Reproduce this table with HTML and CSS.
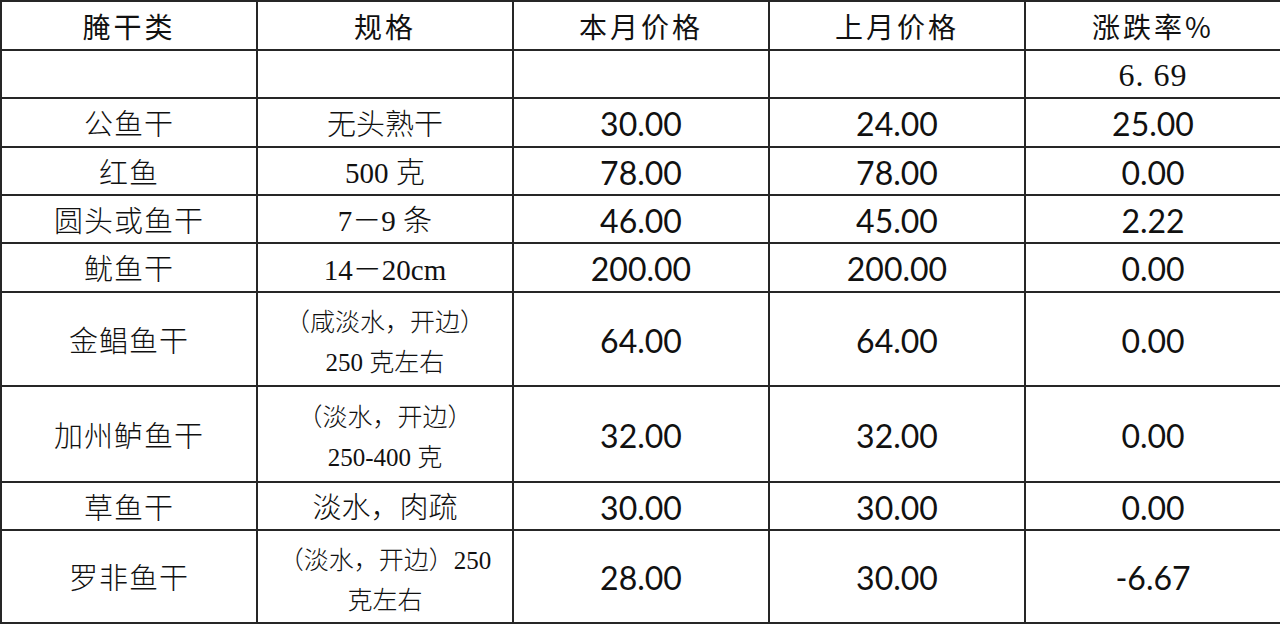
FILE: index.html
```html
<!DOCTYPE html>
<html lang="zh">
<head>
<meta charset="utf-8">
<link rel="stylesheet" href="styles.css">
</head>
<body>
<table class="price">
  <colgroup><col class="c"><col class="c"><col class="c"><col class="c"><col class="c"></colgroup>
  <tr class="h49 head">
    <td>腌干类</td><td>规格</td><td>本月价格</td><td>上月价格</td><td>涨跌率%</td>
  </tr>
  <tr class="h48">
    <td></td><td></td><td></td><td></td><td class="serifnum">6. 69</td>
  </tr>
  <tr class="h49">
    <td class="name">公鱼干</td><td class="spec">无头熟干</td><td class="num">30.00</td><td class="num">24.00</td><td class="num">25.00</td>
  </tr>
  <tr class="h48">
    <td class="name">红鱼</td><td class="spec">500 克</td><td class="num">78.00</td><td class="num">78.00</td><td class="num">0.00</td>
  </tr>
  <tr class="h48">
    <td class="name">圆头或鱼干</td><td class="spec">7－9 条</td><td class="num">46.00</td><td class="num">45.00</td><td class="num">2.22</td>
  </tr>
  <tr class="h49">
    <td class="name">鱿鱼干</td><td class="spec">14－20cm</td><td class="num">200.00</td><td class="num">200.00</td><td class="num">0.00</td>
  </tr>
  <tr class="h94">
    <td class="name">金鲳鱼干</td><td class="spec small">（咸淡水，开边）<br>250 克左右</td><td class="num">64.00</td><td class="num">64.00</td><td class="num">0.00</td>
  </tr>
  <tr class="h96">
    <td class="name">加州鲈鱼干</td><td class="spec small">（淡水，开边）<br>250-400 克</td><td class="num">32.00</td><td class="num">32.00</td><td class="num">0.00</td>
  </tr>
  <tr class="h48">
    <td class="name">草鱼干</td><td class="spec">淡水，肉疏</td><td class="num">30.00</td><td class="num">30.00</td><td class="num">0.00</td>
  </tr>
  <tr class="h93">
    <td class="name">罗非鱼干</td><td class="spec small">（淡水，开边）250<br>克左右</td><td class="num">28.00</td><td class="num">30.00</td><td class="num">-6.67</td>
  </tr>
</table>
</body>
</html>
```
FILE: styles.css
```css
html, body {
  margin: 0;
  padding: 0;
  background: #ffffff;
}
.price {
  border-collapse: collapse;
  table-layout: fixed;
  width: 1278px;
  margin: 0;
  color: #111;
}
.price .c { width: 256px; }
.price td {
  border: 2px solid #262626;
  padding: 0;
  text-align: center;
  vertical-align: middle;
  font-family: "Noto Sans CJK SC", sans-serif;
  font-size: 28px;
  font-weight: 300;
  line-height: 1.2;
}
.price .h49 { height: 49px; }
.price .h48 { height: 48px; }
.price .h94 { height: 94px; }
.price .h96 { height: 96px; }
.price .h93 { height: 93px; }
.price .head td {
  font-weight: 400;
  letter-spacing: 3px;
  padding-top: 2px;
}
.price td.name {
  letter-spacing: 1px;
  font-size: 29px;
}
.price td.spec {
  font-family: "Liberation Serif", "Noto Sans CJK SC", serif;
  font-size: 29px;
  padding-top: 5px;
}
.price td.spec.small {
  font-size: 25px;
  line-height: 40px;
  padding-top: 8px;
}
.price td.num {
  font-family: Lato, "Liberation Sans", sans-serif;
  font-size: 32px;
  font-weight: 400;
  padding-top: 4px;
}
.price td.serifnum {
  font-family: "Liberation Serif", serif;
  font-size: 32px;
  font-weight: 400;
  padding-top: 2px;
  letter-spacing: 1px;
}
```
